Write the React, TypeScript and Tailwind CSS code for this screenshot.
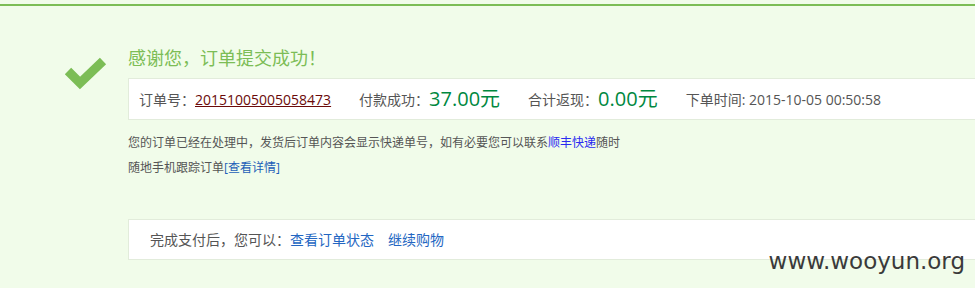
const font = { fontFamily: '"Open Sans", "Noto Sans CJK SC", sans-serif' };

const CheckMark = () => (
  <svg width="44" height="34" viewBox="0 0 44 34" className="ml-[64px] mt-[50px]">
    <polyline
      points="4,15 16,27 39,5"
      fill="none"
      stroke="#7cbd56"
      strokeWidth="9"
      strokeLinecap="butt"
      strokeLinejoin="miter"
    />
  </svg>
);

const OrderRow = () => (
  <div className="flex h-[42px] items-center border-y border-l border-[#e2ecdb] bg-white pl-[10px] text-[14px] text-[#555]">
    <span>订单号：</span>
    <a href="#" className="text-[14px] text-[#6b0a0a] underline">
      20151005005058473
    </a>
    <span className="ml-[28px]">付款成功：</span>
    <span className="text-[20px] text-[#00883f]">37.00元</span>
    <span className="ml-[28px]">合计返现：</span>
    <span className="text-[20px] text-[#00883f]">0.00元</span>
    <span className="ml-[28px]">下单时间: 2015-10-05 00:50:58</span>
  </div>
);

export default function App() {
  return (
    <div className="relative h-[288px] w-full overflow-hidden bg-[#f1fcea] pt-1" style={font}>
      <div className="flex h-full border-t-2 border-[#7cbd56]">
        <div className="w-[128px] shrink-0">
          <CheckMark />
        </div>
        <div className="flex-1">
          <h1 className="mt-[40px] h-[24px] text-[18px] leading-[24px] text-[#7cbd56]">
            感谢您，订单提交成功！
          </h1>
          <div className="mt-[8px]">
            <OrderRow />
          </div>
          <div className="mt-[10px] text-[12px] leading-[25px] text-[#555]">
            <p>
              您的订单已经在处理中，发货后订单内容会显示快递单号，如有必要您可以联系
              <a href="#" className="text-[#2b2bf0]">顺丰快递</a>随时
            </p>
            <p>
              随地手机跟踪订单
              <a href="#" className="text-[#1d5fb8]">[查看详情]</a>
            </p>
          </div>
          <div className="mt-[39px] flex h-[41px] items-center border-y border-l border-[#e2ecdb] bg-white pl-[21px] text-[14px] text-[#555]">
            <span>完成支付后，您可以：</span>
            <a href="#" className="text-[#2366c2]">查看订单状态</a>
            <a href="#" className="ml-[14px] text-[#2366c2]">继续购物</a>
          </div>
        </div>
      </div>
      <div
        className="absolute bottom-[15px] right-[10px] text-[23px] leading-none text-[#3a3a3a]"
        style={{ fontFamily: '"DejaVu Sans", sans-serif' }}
      >
        www.wooyun.org
      </div>
    </div>
  );
}
